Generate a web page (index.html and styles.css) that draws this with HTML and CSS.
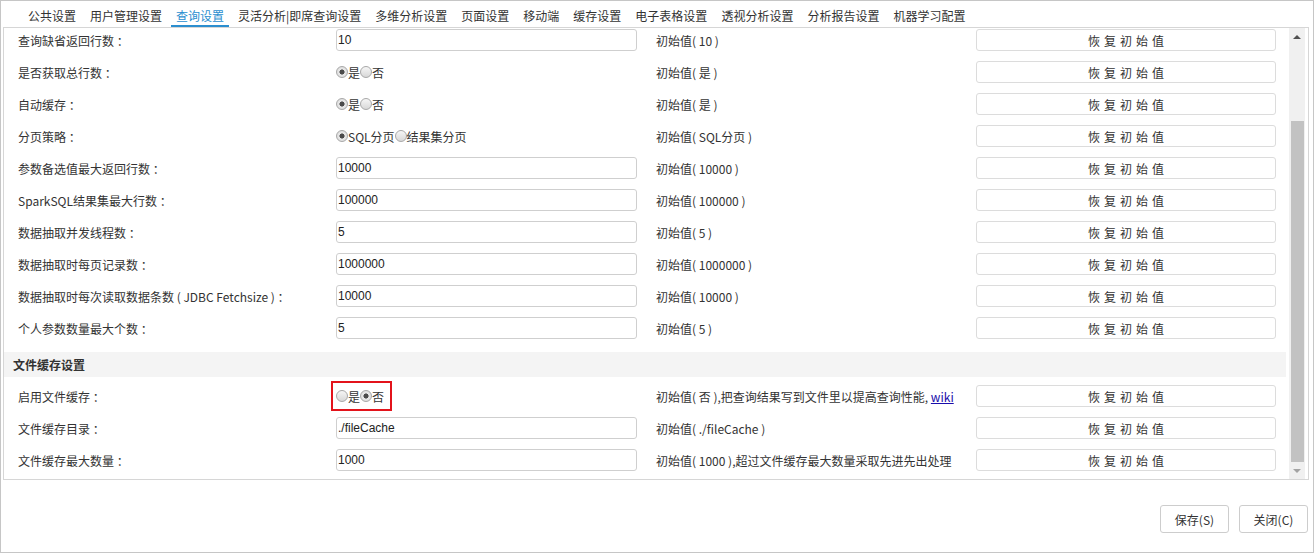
FILE: index.html
```html
<!DOCTYPE html>
<html lang="zh-CN">

<head>
    <meta charset="UTF-8">
    <meta name="viewport" content="width=device-width, initial-scale=1.0">
    <title>系统选项</title>
    <link rel="stylesheet" href="styles.css">
</head>

<body>
    <div class="page">
        <ul class="tabs">
            <li class="tab">公共设置</li>
            <li class="tab">用户管理设置</li>
            <li class="tab active">查询设置</li>
            <li class="tab">灵活分析|即席查询设置</li>
            <li class="tab">多维分析设置</li>
            <li class="tab">页面设置</li>
            <li class="tab">移动端</li>
            <li class="tab">缓存设置</li>
            <li class="tab">电子表格设置</li>
            <li class="tab">透视分析设置</li>
            <li class="tab">分析报告设置</li>
            <li class="tab">机器学习配置</li>
        </ul>

        <div class="panel">
            <div class="view">
                <div class="list">
                    <div class="row">
                        <span class="label">查询缺省返回行数 ：</span>
                        <span><input class="field" type="text" value="10"></span>
                        <span class="init">初始值( 10 )</span>
                        <span><button class="reset">恢复初始值</button></span>
                    </div>
                    <div class="row">
                        <span class="label">是否获取总行数 ：</span>
                        <span class="radios">
                            <input class="radio" type="radio" name="total" checked>是<input class="radio" type="radio" name="total">否
                        </span>
                        <span class="init">初始值( 是 )</span>
                        <span><button class="reset">恢复初始值</button></span>
                    </div>
                    <div class="row">
                        <span class="label">自动缓存 ：</span>
                        <span class="radios">
                            <input class="radio" type="radio" name="auto" checked>是<input class="radio" type="radio" name="auto">否
                        </span>
                        <span class="init">初始值( 是 )</span>
                        <span><button class="reset">恢复初始值</button></span>
                    </div>
                    <div class="row">
                        <span class="label">分页策略 ：</span>
                        <span class="radios">
                            <input class="radio" type="radio" name="paging" checked>SQL分页<input class="radio" type="radio" name="paging">结果集分页
                        </span>
                        <span class="init">初始值( SQL分页 )</span>
                        <span><button class="reset">恢复初始值</button></span>
                    </div>
                    <div class="row">
                        <span class="label">参数备选值最大返回行数 ：</span>
                        <span><input class="field" type="text" value="10000"></span>
                        <span class="init">初始值( 10000 )</span>
                        <span><button class="reset">恢复初始值</button></span>
                    </div>
                    <div class="row">
                        <span class="label">SparkSQL结果集最大行数 ：</span>
                        <span><input class="field" type="text" value="100000"></span>
                        <span class="init">初始值( 100000 )</span>
                        <span><button class="reset">恢复初始值</button></span>
                    </div>
                    <div class="row">
                        <span class="label">数据抽取并发线程数 ：</span>
                        <span><input class="field" type="text" value="5"></span>
                        <span class="init">初始值( 5 )</span>
                        <span><button class="reset">恢复初始值</button></span>
                    </div>
                    <div class="row">
                        <span class="label">数据抽取时每页记录数 ：</span>
                        <span><input class="field" type="text" value="1000000"></span>
                        <span class="init">初始值( 1000000 )</span>
                        <span><button class="reset">恢复初始值</button></span>
                    </div>
                    <div class="row">
                        <span class="label">数据抽取时每次读取数据条数 ( JDBC Fetchsize ) ：</span>
                        <span><input class="field" type="text" value="10000"></span>
                        <span class="init">初始值( 10000 )</span>
                        <span><button class="reset">恢复初始值</button></span>
                    </div>
                    <div class="row">
                        <span class="label">个人参数数量最大个数 ：</span>
                        <span><input class="field" type="text" value="5"></span>
                        <span class="init">初始值( 5 )</span>
                        <span><button class="reset">恢复初始值</button></span>
                    </div>

                    <div class="group-title">文件缓存设置</div>
                    <div class="row">
                        <span class="label">启用文件缓存 ：</span>
                        <span class="radios">
                            <span class="marked">
                                <input class="radio" type="radio" name="fileCache">是<input class="radio" type="radio" name="fileCache" checked>否
                            </span>
                        </span>
                        <span class="init">初始值( 否 ),把查询结果写到文件里以提高查询性能, <a href="#" class="wiki">wiki</a></span>
                        <span><button class="reset">恢复初始值</button></span>
                    </div>
                    <div class="row">
                        <span class="label">文件缓存目录 ：</span>
                        <span><input class="field" type="text" value="./fileCache"></span>
                        <span class="init">初始值( ./fileCache )</span>
                        <span><button class="reset">恢复初始值</button></span>
                    </div>
                    <div class="row">
                        <span class="label">文件缓存最大数量 ：</span>
                        <span><input class="field" type="text" value="1000"></span>
                        <span class="init">初始值( 1000 ),超过文件缓存最大数量采取先进先出处理</span>
                        <span><button class="reset">恢复初始值</button></span>
                    </div>
                </div>
            </div>

            <div class="scrollbar">
                <div class="sb-btn"><span class="arrow-up"></span></div>
                <div class="sb-space"></div>
                <div class="sb-thumb"></div>
                <div class="sb-btn"><span class="arrow-down"></span></div>
            </div>
        </div>

        <div class="footer">
            <button class="btn">保存(S)</button>
            <button class="btn">关闭(C)</button>
        </div>
    </div>
</body>

</html>
```

FILE: styles.css
```css
* {
    padding: 0;
    margin: 0;
    box-sizing: border-box;
}

body {
    font-family: "Noto Sans CJK SC", "Noto Sans", sans-serif;
    font-size: 12px;
    color: #333;
    background-color: #fff;
}

.page {
    width: 1314px;
    height: 553px;
    border: 1px solid #c6c6c6;
    padding: 0 4px 0 2px;
}

/* tabs */
.tabs {
    list-style: none;
    display: flex;
    gap: 4px;
    height: 26px;
    padding-left: 20px;
}

.tab {
    padding: 7px 5px 1px;
    line-height: 16px;
    border-bottom: 2px solid transparent;
    white-space: nowrap;
}

.tab.active {
    color: #2b8ecf;
    border-bottom-color: #2b8ecf;
}

/* settings panel */
.panel {
    height: 453px;
    border: 1px solid #d6d6d6;
    display: flex;
}

/* list is shown scrolled to the bottom, top row partly hidden */
.view {
    flex: 1;
    overflow: hidden;
    display: flex;
    flex-direction: column;
    justify-content: flex-end;
}

.list {
    flex-shrink: 0;
    padding-bottom: 3px;
}

.group-title {
    height: 25px;
    line-height: 25px;
    margin: 8px 3px 3px 0;
    padding-left: 9px;
    background-color: #f4f4f4;
    font-weight: bold;
}

.row {
    display: grid;
    grid-template-columns: 332px 320px 320px 300px;
    align-items: center;
    height: 32px;
}

.label {
    padding-left: 14px;
    white-space: nowrap;
}

.field {
    width: 301px;
    height: 22px;
    border: 1px solid #cfcfcf;
    border-radius: 3px;
    padding: 0 1px;
    font-family: "Liberation Sans", "Noto Sans CJK SC", sans-serif;
    font-size: 12px;
    color: #222;
    outline: none;
}

.init {
    white-space: nowrap;
}

.wiki {
    color: #1a0dab;
}

.reset {
    width: 300px;
    height: 22px;
    border: 1px solid #dcdcdc;
    border-radius: 3px;
    background-color: #fff;
    font-family: inherit;
    font-size: 12px;
    color: #333;
    letter-spacing: 4px;
    padding-left: 4px;
}

/* radios */
.radios {
    display: flex;
    align-items: center;
    white-space: nowrap;
}

.marked {
    display: flex;
    align-items: center;
    height: 30px;
    margin-left: -5px;
    padding: 0 6px 0 3px;
    border: 2px solid #e3131b;
}

.radio {
    appearance: none;
    -webkit-appearance: none;
    width: 12px;
    height: 12px;
    border: 1px solid #a8a8a8;
    border-radius: 50%;
    background: linear-gradient(#f6f6f6, #d8d8d8);
    margin: 0;
}

.radio:checked {
    background: radial-gradient(circle, #4a4a4a 0 2.3px, #e9e9e9 2.8px, #d6d6d6);
}

/* fake scrollbar */
.scrollbar {
    width: 16px;
    margin-right: 3px;
    background-color: #f0f0f0;
    display: flex;
    flex-direction: column;
}

.sb-btn {
    height: 17px;
    display: flex;
    justify-content: center;
    align-items: center;
}

.sb-space {
    flex: 1;
}

.sb-thumb {
    height: 341px;
    margin: 0 1px 0 2px;
    background-color: #c2c2c2;
}

.arrow-up {
    border-left: 4px solid transparent;
    border-right: 4px solid transparent;
    border-bottom: 4px solid #505050;
}

.arrow-down {
    border-left: 4px solid transparent;
    border-right: 4px solid transparent;
    border-top: 4px solid #a3a3a3;
}

/* footer buttons */
.footer {
    display: flex;
    justify-content: flex-end;
    gap: 10px;
    padding-top: 25px;
    padding-right: 1px;
}

.btn {
    width: 69px;
    height: 28px;
    border: 1px solid #cdcdcd;
    border-radius: 3px;
    background-color: #fff;
    font-family: inherit;
    font-size: 12px;
    color: #333;
}
```
